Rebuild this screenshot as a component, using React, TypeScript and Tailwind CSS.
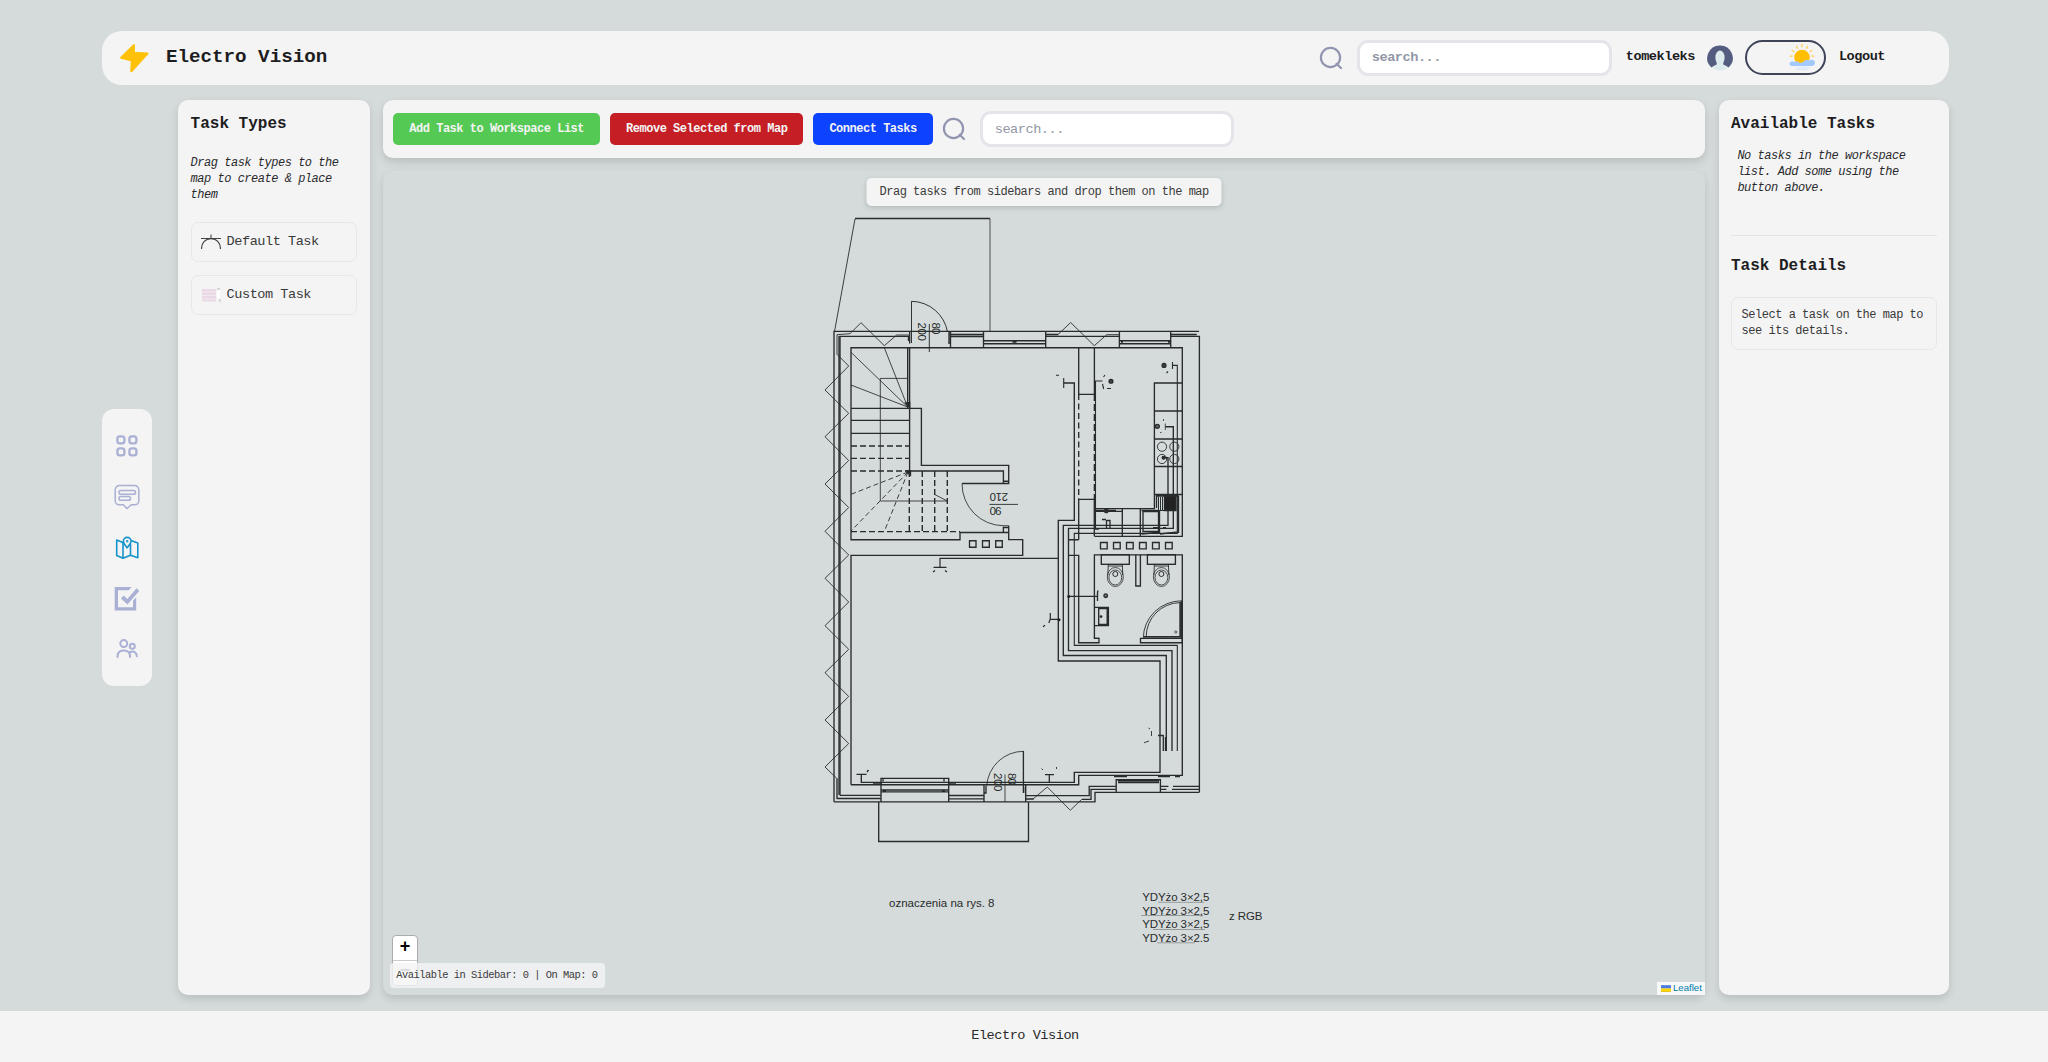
import React from "react";

const MONO = "font-['Liberation_Mono',monospace]";

function SearchIcon() {
  return (
    <svg className="h-[24px] w-[24px] shrink-0" viewBox="0 0 24 24" fill="none" stroke="#9295b0" strokeWidth="2.2" strokeLinecap="round">
      <circle cx="11.5" cy="11.5" r="9.6" />
      <path d="M17.6 17.8 22 22" />
    </svg>
  );
}

function SearchBox({ bold, className }: { bold?: boolean; className?: string }) {
  return (
    <input
      placeholder="search..."
      className={
        "h-[36px] rounded-[11px] border-[3px] border-[#e4e5ea] bg-white px-[12px] text-[13.6px] tracking-[-0.48px] outline-none placeholder:text-[#9298a6] " +
        (bold ? "font-bold " : "") +
        (className ?? "")
      }
    />
  );
}

function Header() {
  return (
    <header className="ml-[102px] mt-[30.500px] flex h-[54px] w-[1847px] shrink-0 items-center rounded-[20px] bg-[#f4f4f5] pl-[17px]">
      <svg className="h-[32px] w-[32px]" viewBox="0 0 32 32">
        <path d="M14.900 3.200 2.200 15.700 12.900 18.400 12.300 29.200 28.400 11.500 14.800 10.900Z" fill="#ffc107" stroke="#ffc107" strokeWidth="2.2" strokeLinejoin="round" />
      </svg>
      <h1 className="ml-[15px] text-[19.2px] font-bold">Electro Vision</h1>
      <div className="ml-auto mr-[64px] flex items-center">
        <SearchIcon />
        <SearchBox bold className="ml-[14px] w-[255px]" />
        <span className="ml-[14px] text-[13.6px] font-bold tracking-[-0.48px]">tomekleks</span>
        <svg className="ml-[12px] h-[26px] w-[26px]" viewBox="0 0 26 26">
          <path d="M13 .4a12.700 12.700 0 0 1 8.600 22.100L17.500 20H8.500L4.400 22.500A12.700 12.700 0 0 1 13 .4Z" fill="#545d80" />
          <path d="M8.400 12.200a4.600 6.600 0 0 1 9.200 0c0 2.500-.6 4.300-1.400 5.500l.4 2.300c1.500.9 3.200 1.600 4.300 2.600A12.600 12.600 0 0 1 13 25.800a12.600 12.600 0 0 1-7.900-3.200c1.100-1 2.800-1.700 4.300-2.600l.4-2.300c-.8-1.200-1.400-3-1.400-5.500Z" fill="#dfeaee" />
        </svg>
        <div className="ml-[12px] flex h-[35px] w-[81px] items-center justify-end rounded-full border-2 border-[#3e4559] pr-[8px]">
          <svg className="h-[30px] w-[28px]" viewBox="0 0 28 30">
            <g stroke="#fbd25a" strokeWidth="1.5" strokeLinecap="round">
              <path d="M14 1.500v2M8.500 3.500l.8 1.600M19.500 3.500l-.8 1.600M4.300 7.500l1.400 1M23.700 7.500l-1.400 1M2.500 13.300l1.500-.2M25.500 13.300l-1.500-.2" />
            </g>
            <circle cx="14" cy="14.500" r="7.800" fill="#ffbf00" />
            <path d="M1.500 20.500c0-2.200 3.300-3.300 5-1.400 1.500-1.300 3.200-1 4.200.1 1.800 1.100 3.500.6 4.700-.2 1.500-2.600 4.500-2.900 6-1.500 2-1.600 5.600-.6 5.600 2.200 0 2.600-2.100 3.400-4.300 3.400H4.300c-1.500 0-2.800-1.200-2.800-2.600Z" fill="#a3caff" />
            <path d="M7 25.200c3-1.200 6-1.400 9-1.700 4 0 5.500.8 6.500 1.700-2 1.700-5 2.500-8.500 2.500s-6-.9-7-2.500Z" fill="#e0ecfb" />
          </svg>
        </div>
        <span className="ml-[13px] text-[13.6px] font-bold tracking-[-0.48px]">Logout</span>
      </div>
    </header>
  );
}

function SideNav() {
  return (
    <nav className="flex h-[277px] w-[50px] shrink-0 flex-col items-center justify-center gap-[24.700px] self-center rounded-[12px] bg-[#f4f4f5] pt-px">
      <svg className="h-[26px] w-[26px]" viewBox="0 0 26 26" fill="none" stroke="#a9b0d4" strokeWidth="2.300">
        <rect x="3.400" y="3.400" width="7" height="7" rx="2.400" />
        <rect x="15.400" y="3.400" width="7" height="7" rx="2.400" />
        <rect x="3.400" y="15.400" width="7" height="7" rx="2.400" />
        <rect x="15.400" y="15.400" width="7" height="7" rx="2.400" />
      </svg>
      <svg className="h-[26px] w-[26px]" viewBox="0 0 26 26" fill="none" stroke="#a9b0d4" strokeWidth="1.500">
        <path d="M5.500 1.500h15a4.300 4.300 0 0 1 4.300 4.300v11a4 4 0 0 1-4 4h-3.500L13 24.500l-3.800-3.700H5.200a4 4 0 0 1-4-4v-11a4.300 4.300 0 0 1 4.300-4.300Z" />
        <rect x="5" y="6.600" width="16.500" height="3.600" rx="1.800" />
        <rect x="5" y="12.600" width="11.500" height="3.600" rx="1.800" />
      </svg>
      <svg className="h-[26px] w-[26px]" viewBox="0 0 26 26" fill="none" stroke="#1593cb" strokeWidth="1.600" strokeLinejoin="round">
        <path d="M10 8 8.800 7.400 2.700 5v15.600l6.300 2.700 7.500-3 7.300 2.500V8L17 5.600M9 7.500v15.800M16.500 9v11.300" />
        <path d="M13.100 12.800C11.500 10.500 9.300 8.700 9.300 6.300a3.900 3.900 0 0 1 7.800 0c0 2.400-2.400 4.200-4 6.500Z" />
        <circle cx="13.200" cy="6.300" r=".4" />
      </svg>
      <svg className="h-[26px] w-[26px]" viewBox="0 0 26 26" fill="#a9b0d4">
        <path d="M.7 1h17l-3 3.200H4v17h15v-6.500l3.200-3.400v13.200H.7Z" />
        <path d="M7 12.500 9.600 9.500l3.700 3.400L22.600 2.200l2.600 2.800-11.700 13.500Z" />
      </svg>
      <svg className="h-[26px] w-[26px]" viewBox="0 0 26 26" fill="none" stroke="#a9b0d4" strokeWidth="2" strokeLinecap="round">
        <circle cx="9.800" cy="7.600" r="3.500" />
        <circle cx="18.300" cy="10.300" r="2.500" />
        <path d="M3.500 21c0-4.200 2.700-6.400 6.300-6.400s6.300 2.200 6.300 6.400M16.200 16.200c3.200-1.600 6.600-.1 6.600 4" />
      </svg>
    </nav>
  );
}

const PANEL = "rounded-[10px] bg-[#f4f4f5] shadow-[0_4px_8px_rgba(0,0,0,0.13)] ";

function TaskTypes() {
  return (
    <aside className={PANEL + "ml-[26px] w-[192px] shrink-0 px-[12.600px] pt-[11.500px]"}>
      <h2 className="text-[16px] font-bold leading-6">Task Types</h2>
      <p className="mt-[19px] text-[12px] italic leading-4 tracking-[-0.48px] text-[#2a2a2c]">Drag task types to the map to create &amp; place them</p>
      <div className="mt-[19.500px] flex h-[40px] items-center gap-[6px] rounded-[7px] border border-[#e7e7ea] pl-[9px] text-[13.600px] tracking-[-0.48px] text-[#3a3a3a]">
        <svg className="h-[20px] w-[20px]" viewBox="0 0 20 20" fill="none" stroke="#444" strokeWidth="1.100">
          <path d="M0 6.500h20M10 2.500v4M.5 17C.5 11 4 6.800 10 6.800S19.500 11 19.500 17" />
        </svg>
        <span>Default Task</span>
      </div>
      <div className="mt-[13px] flex h-[40px] items-center gap-[6px] rounded-[7px] border border-[#e7e7ea] pl-[9px] text-[13.600px] tracking-[-0.48px] text-[#3a3a3a]">
        <svg className="h-[20px] w-[20px]" viewBox="0 0 20 20">
          <rect x="1" y="4" width="14" height="12.500" fill="#ead9e4" />
          <path d="M1 7h14M1 10.500h14M1 14h14" stroke="#f4edf2" strokeWidth=".8" />
          <path d="M16 5h3v8h-3z" fill="#fff" />
          <path d="M16 4h3M19 14v3" stroke="#aaa" strokeWidth=".8" />
        </svg>
        <span>Custom Task</span>
      </div>
    </aside>
  );
}

const BUTTON = "h-[32px] rounded-[5px] px-[16px] text-[12px] tracking-[-0.48px] font-bold text-[#f4f4f4] ";

function Toolbar() {
  return (
    <div className={PANEL + "flex h-[58px] shrink-0 items-center pl-[10px]"}>
      <button className={BUTTON + "bg-[#54c954]"}>Add Task to Workspace List</button>
      <button className={BUTTON + "ml-[10px] bg-[#c51e25]"}>Remove Selected from Map</button>
      <button className={BUTTON + "ml-[10px] bg-[#0d42ff]"}>Connect Tasks</button>
      <div className="ml-[9px] flex items-center">
        <SearchIcon />
        <SearchBox className="ml-[14px] w-[254px]" />
      </div>
    </div>
  );
}

function Toilet({ x }: { x: number }) {
  return (
    <g>
      <rect x={x - 14} y="554.700" width="28" height="9.600" />
      <path d={`M${x - 7} 564.300L${x - 7.500} 575M${x + 7} 564.300L${x + 7.500} 575M${x - 7} 566H${x + 7}`} strokeWidth=".9" />
      <ellipse cx={x} cy="577" rx="8" ry="9.500" strokeWidth=".8" />
      <ellipse cx={x} cy="577.500" rx="6.400" ry="7.500" strokeWidth=".8" />
      <circle cx={x} cy="574" r="2.500" strokeWidth="1" />
    </g>
  );
}

function FloorPlan() {
  return (
    <svg className="block h-[823px] w-[1322px]" viewBox="383 171 1322 823" fill="none" stroke="#282b2b" strokeWidth="1.350">
      {/* terrace and upper door */}
      <path d="M990 218.500H855" strokeWidth="1.400" />
      <path d="M855 219 834.500 331.500" strokeWidth=".9" />
      <path d="M990 218.500V331" strokeWidth=".8" />
      <path d="M911.500 343V301.300A37 37 0 0 1 947.500 332M929.300 324V352" strokeWidth=".95" />
      {/* outer walls */}
      <path d="M834 801.700V331.400H1199M840 795.300V336.400H909M837 799V778.300M909 347.700H851V539.700H960V532.500H1008.700M909 347.700H1182.300V536.300H1094.500" />
      <path d="M839 336V795M909.700 331V343.500M908.500 337v4M949 331v13M950.500 331V347.700M983.500 331V347.700M950.500 334.500h33M950.500 336.500h33M983.500 340.700h62M983.500 343.700h62M1012.500 342h4M1045.700 331V347.700M1045.700 334.500h12.500M1045.700 336.400h73.600M1119.400 331V347.700M1119.400 340.700h51.300M1119.400 343.700h51.300M1121 342h2M1168 342h2M1170.700 331V347.700M1170.700 334.500h26M1170.700 336.400h28.700V792.300" />
      {/* insulation zigzags */}
      <path d="M837 354.300V334.700L850 333.700 861 322.700 884.300 345.700 896.700 335H909M837 354.300 848.700 366 825 390 848.700 413.300 825 436.700 848.700 460.500 825 484 848.700 507.500 825 531.300 848.700 555 825 578.300 848.700 602 825 625.700 848.700 649.300 825 672.700 848.700 696.500 825 720 848.700 743.500 825 767 836.700 778.300M1058 334.500 1070.700 322.500 1094.300 345.700 1106.700 334.700H1119" strokeWidth=".9" />
      {/* stairs */}
      <path d="M907.700 347.700V408M909.600 347.700V471M851 408.400H921.400V465.400H1008.700V483.500H962M908 471H1003.400V483.500M851 420.400H909.300M851 433.300H909.300M1003.400 481.200h5.300" />
      <path d="M851 352.300 907.700 407M851 385 907.700 407M884.300 347.700 907.700 407M908 378.400H880.300V501H947.300L934.300 494.300M962 483.700A41.500 42 0 0 0 1003.400 525.700H1008.700" strokeWidth=".85" />
      <path d="M851 446H909M851 458.400H909M851 471H909M909.300 471V531.500M922.300 471V531.500M934.700 471V531.500M947.300 471V531.500M851 531.600H960" strokeDasharray="6 3" strokeWidth="1.400" />
      <path d="M908 472 851 494.300M908 472 851 531M908 472 884.500 531" strokeDasharray="5 3" strokeWidth=".9" />
      <path d="M905.500 403l4.200 4.500v-5zM906.500 471h4v4z" fill="#282b2b" />
      <path d="M1003.400 532.500V526.500M1003.400 527.500h5.300M1008.700 525.700V539.600H1022.700V555.400H851V784.700" />
      <path d="M989.500 504.400h28.500" strokeWidth=".9" />
      <path d="M969.500 540.700h6.500v6.500h-6.500zM982.500 540.700h6.800v6.500h-6.800zM995.700 540.700h6.600v6.500h-6.600z" />
      {/* hall wall */}
      <path d="M1078.700 347.700V394.400H1094.300M1094.400 347.700V394M1078.700 539.700V499.400H1094.300V536.300M1068.700 539.700h10M1068.700 555.400h10V642.700H1099V638.300H1094.400V554.800H1182.300V775.400H1078.700V784.700H851M1063.700 383h10.600V520.400H1058.300V661H1160V772.400H1074.300V782.300H861.300V774.500" />
      <path d="M1078.700 394V499" strokeDasharray="6 3.500" />
      <path d="M1094.600 394V499" strokeDasharray="7 3" strokeWidth="1.800" />
      <path d="M1063.700 378v10M1059 375.300h-3M1095.500 528V381h7M1102.500 384l1.200 5M1105 375l-1.500 2M1107 388.500h4M1172.500 362v7M1172.500 365.400h4.800V533.400H1074.300V645.400H1177.300V751M1168 371.500l-1.500 1.500" strokeWidth="1.100" />
      <circle cx="1111" cy="381.200" r="1.900" fill="#444" />
      <circle cx="1164" cy="365.400" r="1.900" fill="#444" />
      {/* cabling */}
      <path d="M1163 457.700H1168V525.400H1063.300V655.500H1166.300V751M1165.300 426.700h8V528.400H1068.500V650.600H1172V751" />
      {/* kitchen */}
      <path d="M1182.300 383H1154.400V508.600H1094.400M1154.400 411h28M1154.400 439h28M1154.400 466.500h28M1154.400 494.500h28M1096 511.400h26M1096 510.300h20M1122.300 508.600V536M1140.300 508.600V536M1141.500 510.500H1158M1143 511.500H1158.500V531.500H1143ZM1159.500 511V532.500L1141.500 534M1156.500 508V496H1178V532L1160 534M1178.500 496V533M1106.500 520v8M1110 520v8M1106.500 520.500h4M1102 519.500h4" />
      <circle cx="1106.300" cy="511" r="1.800" fill="#333" />
      <circle cx="1162" cy="446.700" r="4.600" strokeWidth=".9" />
      <circle cx="1174.300" cy="446.700" r="4.600" strokeWidth=".9" />
      <circle cx="1162" cy="459" r="4.600" strokeWidth=".9" />
      <circle cx="1174.300" cy="459" r="4.600" strokeWidth=".9" />
      <circle cx="1163.500" cy="457.700" r="1.300" fill="#333" />
      <circle cx="1157.300" cy="426.300" r="2" fill="#666" />
      <path d="M1165.300 423.500v6.500M1163.500 421v-2M1160 432.500h1.500" strokeWidth=".8" />
      <path d="M1164.500 496.500h11.500v14h-11.500z" fill="#222" />
      <path d="M1158.500 497v13.500M1160.500 497v13.500M1162.500 497v13.500M1158 510.500h8" strokeWidth="1" />
      <path d="M1153 527.800h6M1163 527.800h3M1095 529h4" strokeWidth="1.600" />
      {/* ventilation squares */}
      <path d="M1100.500 542.500h6.700v6.300h-6.700zM1113.500 542.500h6.700v6.300h-6.700zM1126.500 542.500h6.700v6.300h-6.700zM1139.500 542.500h6.700v6.300h-6.700zM1152.500 542.500h6.700v6.300h-6.700zM1165.500 542.500h6.700v6.300h-6.700z" />
      {/* bathroom */}
      <Toilet x={1115.300} />
      <Toilet x={1161.400} />
      <path d="M1135.800 554.800V586h4.600V554.800M1068.700 596.400h29M1098 590.500l-.5 2v8.500M1094.400 607.400h14V625.600h-14M1098.700 608.500h8.500v16h-8.500zM1094.400 638.300h4.600M1140.500 638.300h41.800v4.400h-41.800zM1181.400 600.800V638M1180 602v34.700h-36" />
      <path d="M1143.300 638A38.500 37.500 0 0 1 1181.700 600.800M1146.200 636.700A34.500 34 0 0 1 1180 602.600" strokeWidth=".9" />
      <circle cx="1105.700" cy="595.700" r="1.800" fill="#777" />
      <circle cx="1101" cy="616.600" r=".8" />
      <circle cx="1175.800" cy="632" r="1.100" strokeWidth=".7" />
      <path d="M940 567V558.400H1058.300M933.500 567.400h13M935 570.500l-2 1.500M945 570.500l2 1.500M1050.300 619.300h8M1050.300 613v6l-1.500 4M1045 625.300l-2 1.500" strokeWidth="1.200" />
      <circle cx="1059" cy="619.800" r="1.500" fill="#222" stroke="none" />
      <circle cx="1068.700" cy="596.400" r="1.500" fill="#222" stroke="none" />
      {/* lower walls */}
      <path d="M856.500 774.400h10M867 772l1.500-2M881 801.700V778.400H948.700V801.700M878.700 802V841.500H1028.500V802M881 790h67.700M881 791.900h67.700M883 791h3M942 791h3M883 781.500v-2.500M944 781.500v-2.500M840 795.300h41M837 798.500h44M834 801.800H1095V792.400H1199.400M948.700 795.500h35M948.700 798.900h35M984 785V801.800M986 786v7h-2.500M1023.400 751V793M1025.700 785V801.800M1023.700 787v6M1025.700 795.600H1089.200V786.300H1116M1025.700 799h8M1082 799.300h9V789.300H1116M1116.200 792.400V779.700H1160.400V792.400M1118 782.500h41M1118 780.800h41M1160.400 786.300h8M1173 786.300h26.400M1160.400 789.300h6M1172 789.300h27.400" />
      <path d="M1114 776.500h13M1158 776.500h12M1175 776.500h5M873 784h9M948 784h8" strokeWidth="1.600" />
      <path d="M1023.400 751.300A37 37 0 0 0 986.700 786M1005 774.500V802M1033 799 1047.300 787 1070.300 810.300 1081.700 799.300" strokeWidth=".85" />
      <path d="M1049.300 782v-7M1045 774.600h9M1158 735.500h5.300V751M1165.500 737v14" strokeWidth="1.300" />
      <path d="M1043 770l-1.500-1.500M1056.500 769v-2M1151.500 731v5M1150 729l-1.500-1M1149 741l-5 1.700" strokeWidth=".9" />
      {/* labels */}
      <g fill="#282b2b" stroke="none" className="font-['Liberation_Sans',sans-serif]">
        <text fontSize="11.500" textLength="18.500" transform="translate(918 322.500) rotate(90)">200</text>
        <text fontSize="11.500" textLength="12" transform="translate(931.500 322.500) rotate(90)">80</text>
        <text fontSize="11.500" textLength="18.500" transform="translate(1008 493.200) rotate(180)">210</text>
        <text fontSize="11.500" textLength="12" transform="translate(1001.500 506.700) rotate(180)">90</text>
        <text fontSize="11.500" textLength="18.500" transform="translate(993.500 773) rotate(90)">200</text>
        <text fontSize="11.500" textLength="12" transform="translate(1008 773) rotate(90)">80</text>
        <text x="889" y="906.800" fontSize="11.500" textLength="105.500">oznaczenia na rys. 8</text>
        <text x="1142.300" y="900.800" fontSize="11.500" textLength="67">YDYżo 3×2,5</text>
        <text x="1142.300" y="914.500" fontSize="11.500" textLength="67">YDYżo 3×2,5</text>
        <text x="1142.300" y="928.300" fontSize="11.500" textLength="67">YDYżo 3×2,5</text>
        <text x="1142.300" y="942" fontSize="11.500" textLength="67">YDYżo 3×2.5</text>
        <text x="1229" y="920.200" fontSize="11.500" textLength="33.500">z RGB</text>
      </g>
      <path d="M1158 902.300h46M1141 915.500h62M1153 929.500h52M1157 942.800h38" strokeWidth=".6" stroke="#6b7070" />
    </svg>
  );
}

function MapView() {
  return (
    <div className="relative mt-[13px] flex-1 rounded-[10px] shadow-[0_4px_8px_rgba(0,0,0,0.13)]">
      <FloorPlan />
      <div className="absolute left-1/2 top-[6.500px] flex h-[28.500px] w-[355px] -translate-x-1/2 items-center justify-center whitespace-nowrap rounded-[5px] bg-[#f4f4f5] text-[12px] tracking-[-0.48px] text-[#3a3a3a] shadow-[0_2px_5px_rgba(0,0,0,0.15)]">
        Drag tasks from sidebars and drop them on the map
      </div>
      <div className="absolute bottom-[9px] left-[8.500px] w-[26.500px] rounded-[4px] border border-[#a9adad] bg-white text-center font-['Liberation_Sans',sans-serif] font-bold text-black">
        <div className="h-[24.500px] border-b border-[#ccc] text-[18px] leading-[21px]">+</div>
        <div className="h-[24px] text-[18px] leading-[19px] text-[#777]">−</div>
      </div>
      <div className="absolute bottom-[6.500px] left-[6.500px] flex h-[25.500px] w-[215px] items-center whitespace-nowrap rounded-[4px] bg-[#f4f4f5]/80 pl-[6.400px] text-[10.400px] tracking-[-0.48px] text-[#3a3a3a]">
        Available in Sidebar: 0 | On Map: 0
      </div>
      <div className="absolute bottom-0 right-0 flex h-[13px] w-[48px] items-center gap-[2px] bg-white/80 pl-[4px] font-['Liberation_Sans',sans-serif] text-[9.600px] text-[#0078a8]">
        <svg className="h-[7px] w-[10px]" viewBox="0 0 12 8">
          <path fill="#4c7be1" d="M0 0h12v4H0z" />
          <path fill="#ffd500" d="M0 4h12v3H0z" />
          <path fill="#e0bc00" d="M0 7h12v1H0z" />
        </svg>
        Leaflet
      </div>
    </div>
  );
}

function TaskPanel() {
  return (
    <aside className={PANEL + "ml-[13.500px] w-[230.500px] shrink-0 pl-[12.500px] pr-[12px] pt-[11.500px]"}>
      <h2 className="text-[16px] font-bold leading-6">Available Tasks</h2>
      <p className="mt-[12.500px] px-[6.400px] text-[12px] italic leading-4 tracking-[-0.48px] text-[#2a2a2c]">No tasks in the workspace list. Add some using the button above.</p>
      <hr className="mt-[38.500px] border-[#e4e4e8]" />
      <h2 className="mt-[18px] text-[16px] font-bold leading-6">Task Details</h2>
      <div className="mt-[19px] rounded-[7px] border border-[#e7e7ea] py-[9.600px] pl-[9.600px] pr-[8px] text-[12px] leading-4 tracking-[-0.48px] text-[#3a3a3a]">
        Select a task on the map to see its details.
      </div>
    </aside>
  );
}

export default function App() {
  return (
    <div className={"flex h-[1062px] w-[2048px] flex-col overflow-hidden bg-[#d5dbdb] text-[#1d1d1f] " + MONO}>
      <Header />
      <main className="ml-[102px] mt-[15.500px] flex h-[894.700px] w-[1847px] shrink-0">
        <SideNav />
        <TaskTypes />
        <section className="ml-[13.300px] flex min-w-0 flex-1 flex-col">
          <Toolbar />
          <MapView />
        </section>
        <TaskPanel />
      </main>
      <footer className="mt-[16px] flex flex-1 items-center justify-center bg-[#f4f4f4] pl-[2px] text-[13.600px] tracking-[-0.48px] text-[#2a2a2c]">Electro Vision</footer>
    </div>
  );
}
